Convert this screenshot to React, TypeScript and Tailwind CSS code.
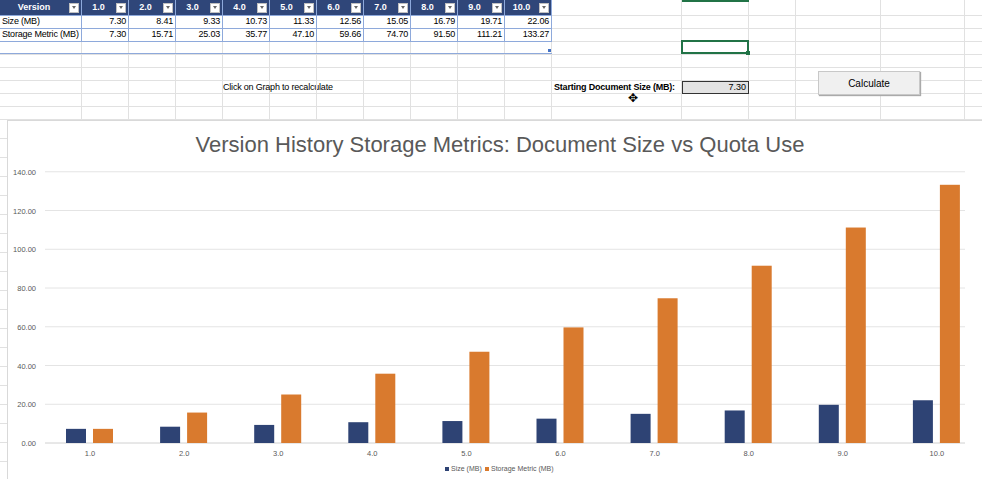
import React from "react";

const cols = [82, 47, 47, 47, 47, 47, 47, 47, 47, 47, 47, 130, 67, 47, 85, 84, 30];
const rows = [16, 13, 13, 13, 13, 13, 13, 13, 13];
const size = [7.3, 8.41, 9.33, 10.73, 11.33, 12.56, 15.05, 16.79, 19.71, 22.06];
const stor = [7.3, 15.71, 25.03, 35.77, 47.1, 59.66, 74.7, 91.5, 111.21, 133.27];

function Dd() {
  return (
    <span className="ml-[3px] inline-flex h-[10px] w-[10px] shrink-0 items-center justify-center bg-white border border-[#c0c0c0]">
      <span className="border-l-[2.5px] border-r-[2.5px] border-t-[3px] border-l-transparent border-r-transparent border-t-[#666]" />
    </span>
  );
}

export default function App() {
  const font = { fontFamily: '"Liberation Sans", Arial, sans-serif' };
  const ticks = [0, 20, 40, 60, 80, 100, 120, 140];
  const y0 = 322;
  const k = 1.9375;
  return (
    <div className="w-[982px] h-[479px] overflow-hidden bg-white relative" style={font}>
      <div className="relative h-[120px]">
        {rows.map((h, r) => (
          <div key={r} className="flex" style={{ height: h }}>
            {cols.map((w, c) => {
              const inTable = c <= 10 && r <= 2;
              let content: React.ReactNode = null;
              let cls = "border-r border-b border-[#e1e1e1] text-[9px] tracking-[-0.2px] leading-none flex items-center px-[2px] shrink-0 whitespace-nowrap text-black overflow-visible";
              if (r === 0 && c <= 10) {
                cls = "border-r border-b border-[#8ea9db] bg-[#2f4679] text-white font-bold text-[9px] flex items-center px-[2px] shrink-0 whitespace-nowrap";
                content = (<><span className="flex-1 text-center">{c === 0 ? "Version" : `${c}.0`}</span><Dd /></>);
              } else if (inTable) {
                cls = "border-r border-b border-[#8ea9db] text-[9px] tracking-[-0.2px] flex items-center px-[2px] shrink-0 whitespace-nowrap text-black";
                if (c === 0) content = r === 1 ? "Size (MB)" : "Storage Metric (MB)";
                else { cls += " justify-end"; content = (r === 1 ? size : stor)[c - 1].toFixed(2); }
              } else if (r === 6 && c === 4) {
                content = <span className="ml-[-2px]">Click on Graph to recalculate</span>;
              } else if (r === 6 && c === 11) {
                content = <span className="font-bold">Starting Document Size (MB):</span>;
              } else if (r === 6 && c === 12) {
                cls = "bg-[#e3e3e3] border border-[#333] text-[9px] flex items-center justify-end pr-[2px] shrink-0";
                content = "7.30";
              }
              return (
                <div key={c} className={cls} style={{ width: w }}>
                  {content}
                </div>
              );
            })}
          </div>
        ))}
        <div className="absolute left-0 top-[53px] w-[552px] h-px bg-[#8ea9db]" />
        <div className="absolute left-[548px] top-[49px] w-[3px] h-[3px] bg-[#4472c4]" />
        <div className="absolute left-[681px] top-[40px] w-[68px] h-[14px] border-2 border-[#217346]" />
        <div className="absolute left-[746px] top-[51px] w-[4px] h-[4px] bg-[#217346]" />
        <div className="absolute left-[682px] top-0 w-[67px] h-[2px] bg-[#217346]" />
        <div className="absolute left-[818px] top-[71px] w-[102px] h-[24px] bg-[#f0f0f0] border border-[#c8c8c8] shadow-[1px_1px_1px_#aaa] text-[10px] flex items-center justify-center">Calculate</div>
        <div className="absolute left-[628px] top-[92px] text-[12px] leading-none">✥</div>
      </div>
      <div className="flex h-[359px]">
        <div className="w-[8px] flex flex-col">
          {Array.from({ length: 19 }).map((_, i) => (
            <div key={i} className="h-[19px] border-b border-[#e1e1e1] shrink-0" />
          ))}
        </div>
        <div className="flex-1 border-t border-l border-[#d9d9d9] bg-white">
          <svg width="974" height="359" style={font}>
            <text x="492" y="31" textAnchor="middle" fontSize="22" fill="#595959">
              Version History Storage Metrics: Document Size vs Quota Use
            </text>
            {ticks.map((t) => {
              const y = y0 - t * k;
              return (
                <g key={t}>
                  <line x1="37" x2="957" y1={y} y2={y} stroke={t === 0 ? "#d0d0d0" : "#e4e4e4"} strokeWidth="1" />
                  <text x="28" y={y + 3} textAnchor="end" fontSize="7.5" fill="#595959">{t.toFixed(2)}</text>
                </g>
              );
            })}
            {size.map((s, i) => {
              const cx = 82 + 94.1 * i;
              return (
                <g key={i}>
                  <rect x={cx - 24} y={y0 - s * k} width="20" height={s * k} fill="#2e4374" />
                  <rect x={cx + 3} y={y0 - stor[i] * k} width="20" height={stor[i] * k} fill="#d97a2e" />
                  <text x={cx} y="335" textAnchor="middle" fontSize="7.5" fill="#595959">{i + 1}.0</text>
                </g>
              );
            })}
            <rect x="437" y="346" width="4" height="4" fill="#2e4374" />
            <text x="443" y="350" fontSize="7" fill="#595959">Size (MB)</text>
            <rect x="477" y="346" width="4" height="4" fill="#d97a2e" />
            <text x="483" y="350" fontSize="7" fill="#595959">Storage Metric (MB)</text>
          </svg>
        </div>
      </div>
    </div>
  );
}
